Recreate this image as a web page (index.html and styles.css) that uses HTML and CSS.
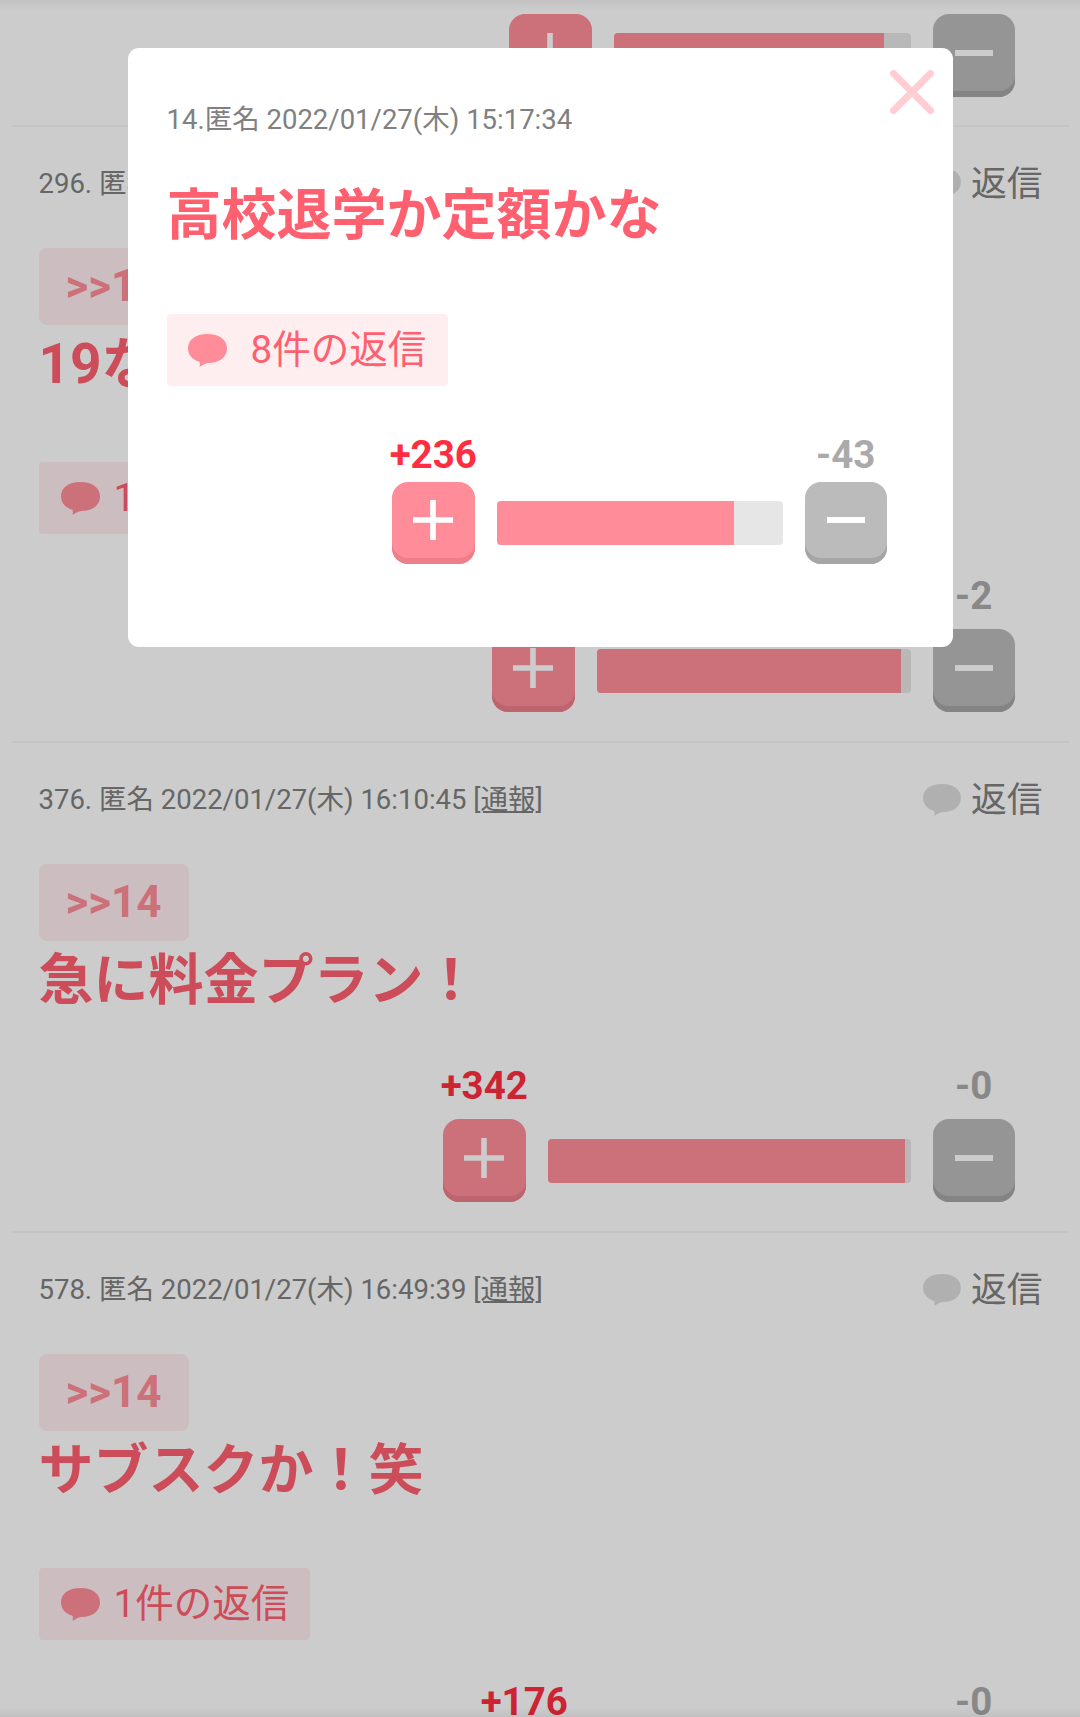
FILE: index.html
```html
<!DOCTYPE html>
<html lang="ja">
<head>
<meta charset="utf-8">
<title>コメント</title>
<link rel="stylesheet" href="styles.css">
</head>
<body>
<svg class="defs" width="0" height="0" aria-hidden="true">
  <symbol id="bubble" viewBox="0 0 39 33">
    <path d="M19.5 0C31.5 0 39 5.5 39 14.5C39 23.5 31 29 20.5 29C17 29 14 31.5 11.5 33C12 31 12 29.5 11.5 27.8C4.500 25.800 0 21 0 14.500C0 5.500 7.500 0 19.500 0Z"/>
  </symbol>
  <symbol id="plus" viewBox="0 0 40 40"><path d="M17.2 0h5.6v17.2H40v5.6H22.800V40h-5.600V22.800H0v-5.600h17.200z"/></symbol>
  <symbol id="minus" viewBox="0 0 38 6"><path d="M0 0h38v6H0z"/></symbol>
</svg>
<main class="page">
  <section class="comment comment-cut">
    <div class="vote">
      <button class="btn btn-plus"><svg class="ico-plus"><use href="#plus"/></svg></button>
      <div class="bar" style="width:297px"><div class="fill" style="width:91%"></div></div>
      <button class="btn btn-minus"><svg class="ico-minus"><use href="#minus"/></svg></button>
    </div>
  </section>
  <section class="comment">
    <div class="meta">
      <p class="info">296. 匿名 2022/01/27(木) 15:58:12 <a class="report">[通報]</a></p>
      <a class="reply"><svg class="ico-reply"><use href="#bubble"/></svg>返信</a>
    </div>
    <a class="quote">&gt;&gt;14</a>
    <p class="text">19なら定額かな</p>
    <a class="replies"><svg class="ico-bubble"><use href="#bubble"/></svg><span class="count">1件の返信</span></a>
    <div class="vote vote-after-tag">
      <span class="num num-plus">+95</span><span class="num-gap"></span><span class="num num-minus">-2</span>
      <button class="btn btn-plus"><svg class="ico-plus"><use href="#plus"/></svg></button>
      <div class="bar" style="width:314px"><div class="fill" style="width:97%"></div></div>
      <button class="btn btn-minus"><svg class="ico-minus"><use href="#minus"/></svg></button>
    </div>
  </section>
  <section class="comment">
    <div class="meta">
      <p class="info">376. 匿名 2022/01/27(木) 16:10:45 <a class="report">[通報]</a></p>
      <a class="reply"><svg class="ico-reply"><use href="#bubble"/></svg>返信</a>
    </div>
    <a class="quote">&gt;&gt;14</a>
    <p class="text">急に料金プラン！</p>
    <div class="vote">
      <span class="num num-plus">+342</span><span class="num-gap"></span><span class="num num-minus">-0</span>
      <button class="btn btn-plus"><svg class="ico-plus"><use href="#plus"/></svg></button>
      <div class="bar" style="width:363px"><div class="fill" style="width:98.500%"></div></div>
      <button class="btn btn-minus"><svg class="ico-minus"><use href="#minus"/></svg></button>
    </div>
  </section>
  <section class="comment">
    <div class="meta">
      <p class="info">578. 匿名 2022/01/27(木) 16:49:39 <a class="report">[通報]</a></p>
      <a class="reply"><svg class="ico-reply"><use href="#bubble"/></svg>返信</a>
    </div>
    <a class="quote">&gt;&gt;14</a>
    <p class="text">サブスクか！笑</p>
    <a class="replies"><svg class="ico-bubble"><use href="#bubble"/></svg><span class="count">1件の返信</span></a>
    <div class="vote vote-after-tag">
      <span class="num num-plus">+176</span><span class="num-gap"></span><span class="num num-minus">-0</span>
      <button class="btn btn-plus"><svg class="ico-plus"><use href="#plus"/></svg></button>
      <div class="bar" style="width:323px"><div class="fill" style="width:98%"></div></div>
      <button class="btn btn-minus"><svg class="ico-minus"><use href="#minus"/></svg></button>
    </div>
  </section>
</main>
<div class="overlay">
  <article class="modal">
    <svg class="close" viewBox="0 0 44 44" aria-label="閉じる"><path d="M3.500 3.500l37 37M40.500 3.500l-37 37"/></svg>
    <p class="info">14.匿名 2022/01/27(木) 15:17:34</p>
    <p class="text modal-text">高校退学か定額かな</p>
    <a class="replies modal-replies"><svg class="ico-bubble"><use href="#bubble"/></svg><span class="count">8件の返信</span></a>
    <div class="vote modal-vote">
      <span class="num num-plus">+236</span><span class="num-gap"></span><span class="num num-minus">-43</span>
      <button class="btn btn-plus"><svg class="ico-plus"><use href="#plus"/></svg></button>
      <div class="bar" style="width:286px"><div class="fill" style="width:83%"></div></div>
      <button class="btn btn-minus"><svg class="ico-minus"><use href="#minus"/></svg></button>
    </div>
  </article>
</div>
</body>
</html>
```
FILE: styles.css
```css
* { box-sizing: border-box; }
html, body { margin: 0; padding: 0; }
body {
  height: 1717px;
  overflow: hidden;
  background: #fff;
  font-family: Roboto, "Noto Sans CJK JP", sans-serif;
  color: #808080;
}
.defs { position: absolute; }
p { margin: 0; }
.page { padding: 0 11px 0 12px; }
.comment {
  padding: 0 26.500px 28.800px;
  border-bottom: 2.750px solid #f5f5f5;
}
.comment-cut { padding-top: 14px; padding-bottom: 28px; }
.meta {
  display: flex;
  justify-content: space-between;
  align-items: center;
  height: 44px;
  margin-top: 35.800px;
}
.info { font-size: 27.500px; line-height: 44px; white-space: nowrap; }
.report { text-decoration: underline; }
.reply { display: flex; align-items: center; gap: 10px; font-size: 35.750px; line-height: 44px; }
.ico-reply { width: 38px; height: 32px; fill: #dcdcdc; }
.quote {
  display: block;
  width: 150px;
  height: 77px;
  margin-top: 42px;
  border-radius: 8px;
  background: #ffeef0;
  color: #ff8c99;
  font-size: 44px;
  font-weight: 700;
  line-height: 77px;
  text-align: center;
}
.text {
  color: #ff6070;
  font-size: 55px;
  font-weight: 700;
  line-height: 78px;
}
.replies {
  display: flex;
  align-items: center;
  width: 271px;
  height: 72px;
  margin-top: 59px;
  padding-left: 22px;
  border-radius: 4px;
  background: #ffeef0;
  color: #ff6070;
  font-size: 38.500px;
}
.ico-bubble { flex: none; width: 39px; height: 33px; fill: #ff8c99; }
.count { margin-bottom: 8px; margin-left: 14px; white-space: nowrap; }
.vote {
  display: grid;
  grid-template-columns: 82.500px auto 82.500px;
  column-gap: 22px;
  row-gap: 10px;
  justify-content: end;
  align-items: center;
  margin-top: 44px;
  margin-right: 27.500px;
}
.comment-cut .vote { margin-top: 0; }
.vote-after-tag { margin-top: 39px; }
.num {
  justify-self: center;
  font-size: 38.500px;
  font-weight: 700;
  line-height: 46px;
  white-space: nowrap;
}
.num-plus { color: #ff2d40; }
.num-minus { color: #aaa; }
.btn {
  display: flex;
  align-items: center;
  justify-content: center;
  width: 82.500px;
  height: 82.500px;
  padding: 0 0 5px;
  border: 0;
  border-radius: 16px;
}
.btn-plus { background: #ff8c99; box-shadow: inset 0 -6px 0 #ed7e8a; }
.btn-minus { background: #bbb; box-shadow: inset 0 -6px 0 #a6a6a6; }
.ico-plus { width: 40px; height: 40px; fill: #fff; }
.ico-minus { width: 38px; height: 6px; fill: #fff; }
.bar {
  height: 44px;
  overflow: hidden;
  border-radius: 4px;
  background: #e6e6e6;
}
.fill { height: 100%; background: #ff8c99; }
.overlay {
  position: fixed;
  inset: 0;
  display: flex;
  justify-content: center;
  align-items: flex-start;
  padding-top: 48px;
  background: rgba(0, 0, 0, .2);
}
.overlay::before,
.overlay::after {
  content: "";
  position: absolute;
  left: 0;
  right: 0;
  height: 10px;
}
.overlay::before { top: 0; background: linear-gradient(rgba(0, 0, 0, .05), transparent); }
.overlay::after { bottom: 0; background: linear-gradient(transparent, rgba(0, 0, 0, .05)); }
.modal {
  position: relative;
  width: 825px;
  height: 599px;
  padding: 50px 65.500px 0 39px;
  border-radius: 11px;
  background: #fff;
}
.close {
  position: absolute;
  top: 22px;
  right: 19px;
  width: 44px;
  height: 44px;
  fill: none;
  stroke: #ffcdd2;
  stroke-width: 7;
  stroke-linecap: round;
}
.modal-text { margin-top: 34px; }
.modal-replies { width: 281px; margin-top: 60px; padding-left: 21px; }
.modal-replies .count { margin-left: 24px; }
.modal-vote { margin-top: 46px; margin-right: 0; row-gap: 3.500px; }
```
